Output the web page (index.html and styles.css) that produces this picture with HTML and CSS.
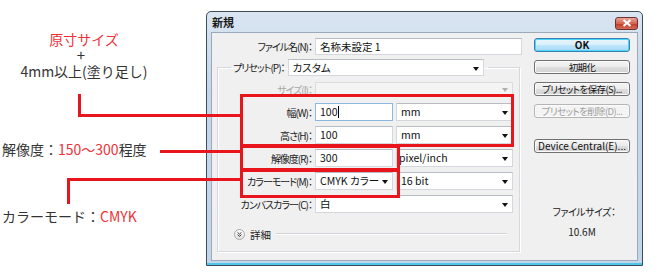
FILE: index.html
```html
<!DOCTYPE html>
<html lang="ja">
<head>
<meta charset="utf-8">
<title>新規</title>
<link rel="stylesheet" href="styles.css">
</head>
<body>
<div class="page">
  <div class="notes">
    <div class="note note-size">
      <div class="red">原寸サイズ</div>
      <div class="plus">+</div>
      <div>4mm以上(塗り足し)</div>
    </div>
    <div class="note note-res">解像度：<span class="red">150～300</span>程度</div>
    <div class="note note-cmyk">カラーモード：<span class="red">CMYK</span></div>
  </div>

  <div class="dialog">
    <div class="titlebar">
      <span class="title">新規</span>
      <span class="close"><svg width="10" height="8" viewBox="0 0 10 8"><path d="M1.5 1 L8.5 7 M8.5 1 L1.5 7" stroke="#fff" stroke-width="2.2"/></svg></span>
    </div>
    <div class="client">
      <div class="form">
        <div class="row row-name">
          <span class="label">ファイル名(N)：</span>
          <span class="field name-field">名称未設定 1</span>
        </div>
        <fieldset class="group">
          <legend class="legend">
            <span class="legend-label">プリセット(P)：</span>
            <span class="field select preset">カスタム<i class="arrow"></i></span>
          </legend>
          <div class="row row-size disabled">
            <span class="label">サイズ(I)：</span>
            <span class="field select wide"><i class="arrow"></i></span>
          </div>
          <div class="row row-f">
            <span class="label">幅(W)：</span>
            <span class="field small focus">100<i class="caret"></i></span>
            <span class="field select unit">mm<i class="arrow"></i></span>
          </div>
          <div class="row row-f">
            <span class="label">高さ(H)：</span>
            <span class="field small">100</span>
            <span class="field select unit">mm<i class="arrow"></i></span>
          </div>
          <div class="row row-f">
            <span class="label">解像度(R)：</span>
            <span class="field small">300</span>
            <span class="field select unit tight">pixel/inch<i class="arrow"></i></span>
          </div>
          <div class="row row-f">
            <span class="label">カラーモード(M)：</span>
            <span class="field select small">CMYK カラー<i class="arrow"></i></span>
            <span class="field select unit">16 bit<i class="arrow"></i></span>
          </div>
          <div class="row row-f">
            <span class="label">カンバスカラー(C)：</span>
            <span class="field select wide">白<i class="arrow"></i></span>
          </div>
          <div class="detail">
            <span class="detail-icon"><svg width="11" height="11" viewBox="0 0 11 11"><path d="M3.2 3 L5.5 5 L7.8 3 M3.2 5.8 L5.5 7.8 L7.8 5.8" fill="none" stroke="#333" stroke-width="1.2"/></svg></span>
            <span class="detail-text">詳細</span>
            <span class="detail-line"></span>
          </div>
        </fieldset>
      </div>
      <div class="side">
        <span class="btn default">OK</span>
        <span class="btn">初期化</span>
        <span class="btn">プリセットを保存(S)...</span>
        <span class="btn off">プリセットを削除(D)...</span>
        <span class="btn dc">Device Central(E)...</span>
        <div class="fsize">ファイルサイズ：</div>
        <div class="fsize-val">10.6M</div>
      </div>
    </div>
  </div>

  <div class="callout box1"></div>
  <div class="callout box2"></div>
  <div class="callout box3"></div>
  <div class="wire a-v"></div>
  <div class="wire a-h"></div>
  <div class="wire b-h"></div>
  <div class="wire c-h"></div>
  <div class="wire c-v"></div>
</div>
</body>
</html>
```

FILE: styles.css
```css
html, body {
  margin: 0;
  padding: 0;
  background: #fff;
}
body {
  width: 662px;
  height: 274px;
  overflow: hidden;
  font-family: "Noto Sans CJK JP", "Noto Sans", sans-serif;
  color: #222;
}
.page {
  position: relative;
  display: flex;
  height: 274px;
}

/* ---------- annotations ---------- */
.notes {
  width: 206px;
  flex: none;
  display: flex;
  flex-direction: column;
}
.note {
  font-size: 14px;
  line-height: 16px;
  color: #333;
  white-space: nowrap;
}
.red { color: #f0323a; }
.note-size {
  margin-top: 31px;
  width: 168px;
  text-align: center;
}
.note-size > div { height: 16px; }
.plus {
  font-size: 15px;
  padding-right: 6px;
}
.note-res {
  margin-top: 62px;
  padding-left: 2px;
}
.note-cmyk {
  margin-top: 51px;
  padding-left: 2px;
}

/* ---------- dialog ---------- */
.dialog {
  flex: none;
  margin-top: 11px;
  width: 437px;
  height: 255px;
  box-sizing: border-box;
  border: 1px solid #3d4c58;
  border-radius: 5px 5px 0 0;
  background: linear-gradient(#d9e5f1, #c6d7e9 30%, #c3d5e8);
  box-shadow: inset 0 -2px 0 #4ec6ea;
  padding: 0 4px 4px;
  display: flex;
  flex-direction: column;
  font-feature-settings: "palt";
}
.titlebar {
  height: 20px;
  flex: none;
  display: flex;
  justify-content: space-between;
  align-items: center;
}
.title {
  font-size: 11px;
  font-weight: bold;
  color: #1a1a1a;
  padding-left: 1px;
}
.close {
  width: 23px;
  height: 13px;
  margin-top: 2px;
  box-sizing: border-box;
  border: 1px solid #6b3230;
  border-radius: 3px;
  background: linear-gradient(#e8a597, #d56450 50%, #c0392b 51%, #d46a55);
  display: flex;
  align-items: center;
  justify-content: center;
}
.close svg { display: block; }

.client {
  flex: 1;
  display: flex;
  background: #f0f0f0;
  border: 1px solid #9aaabb;
}

/* ---------- form ---------- */
.form {
  width: 312px;
  flex: none;
}
.row {
  display: flex;
  align-items: center;
  gap: 3px;
}
.label {
  flex: none;
  width: 100px;
  text-align: right;
  font-size: 10px;
  letter-spacing: -1px;
  color: #222;
  white-space: nowrap;
}
.field {
  position: relative;
  box-sizing: border-box;
  height: 18px;
  background: #fff;
  border: 1px solid #d4d8dd;
  border-top-color: #b8bdc3;
  font-size: 10.5px;
  line-height: 16px;
  padding-left: 4px;
  display: flex;
  align-items: center;
  white-space: nowrap;
  color: #111;
}
.select { padding-right: 14px; }
.arrow {
  position: absolute;
  right: 4px;
  top: 7px;
  width: 0;
  height: 0;
  border-left: 3.5px solid transparent;
  border-right: 3.5px solid transparent;
  border-top: 4px solid #111;
}
.caret {
  display: inline-block;
  width: 1px;
  height: 12px;
  background: #000;
  margin-left: 1px;
}

.row-name {
  margin-top: 5px;
}
.name-field {
  width: 207px;
  height: 17px;
}

.group {
  margin: 4px 0 0 5px;
  padding: 0 0 10px 0;
  width: 303px;
  box-sizing: border-box;
  border: 1px solid #d5d9dd;
  box-shadow: 1px 1px 0 #fff, inset 1px 1px 0 #fff;
  min-width: 0;
}
.legend {
  margin-left: 13px;
  padding: 0 4px 0 2px;
  display: flex;
  align-items: center;
  gap: 3px;
}
.legend-label {
  font-size: 10px;
  letter-spacing: -1px;
  white-space: nowrap;
}
.preset {
  width: 196px;
  height: 17px;
}
.group .label { width: 94px; }

.row-size { margin-top: 6px; }
.row-size .field {
  height: 15px;
  background: #f4f4f4;
  border-color: #dcdcdc;
}
.disabled .label { color: #a7a7a7; }
.disabled .arrow { border-top-color: #b0b0b0; top: 5px; }

.row-f { margin-top: 5px; }
.row-size + .row-f { margin-top: 6px; }
.small { width: 78px; }
.unit { width: 117px; }
.tight { padding-left: 2px; }
.wide { width: 198px; }
.focus {
  border-color: #8cb7df;
}

.detail {
  margin-top: 14px;
  height: 14px;
  display: flex;
  align-items: center;
  padding-left: 16px;
}
.detail-icon {
  width: 11px;
  height: 11px;
  box-sizing: border-box;
  border: 1px solid #a9a9a9;
  border-radius: 50%;
  background: linear-gradient(#ffffff, #e2e2e2);
  display: flex;
  align-items: center;
  justify-content: center;
}
.detail-icon svg { display: block; }
.detail-text {
  font-size: 10.5px;
  margin-left: 5px;
}
.detail-line {
  margin-left: 5px;
  width: 231px;
  height: 1px;
  background: #cfd3d7;
  border-bottom: 1px solid #fff;
}

/* ---------- side buttons ---------- */
.side {
  margin-left: 10px;
  padding-top: 5px;
  width: 96px;
  display: flex;
  flex-direction: column;
  align-items: stretch;
}
.btn {
  height: 14px;
  box-sizing: border-box;
  border: 1px solid #707070;
  border-radius: 3px;
  background: linear-gradient(#f4f4f4, #ececec 48%, #dedede 52%, #d2d2d2);
  box-shadow: inset 0 0 0 1px #fbfbfb;
  font-size: 9.5px;
  letter-spacing: -0.6px;
  line-height: 12px;
  text-align: center;
  color: #111;
  white-space: nowrap;
  margin-bottom: 8px;
}
.btn.default {
  border-color: #3c7fb1;
  box-shadow: inset 0 0 0 1px #48d7fb;
  background: linear-gradient(#eaf6fd, #d9f0fc 48%, #bee6fd 52%, #a7d9f5);
  font-weight: bold;
  font-size: 10px;
  letter-spacing: 0;
}
.btn.off {
  color: #a0a0a0;
  border-color: #b5b5b5;
  background: #f4f4f4;
}
.btn.dc {
  margin-top: 13px;
  font-size: 10px;
  letter-spacing: 0;
}
.fsize {
  margin-top: 44px;
  font-size: 10px;
  letter-spacing: -0.5px;
  line-height: 14px;
  text-align: center;
  padding-left: 4px;
}
.fsize-val {
  margin-top: 6px;
  font-size: 10px;
  line-height: 14px;
  text-align: center;
}

/* ---------- red callouts (overlays) ---------- */
.callout {
  position: absolute;
  box-sizing: border-box;
  border: 3px solid #e8151d;
}
.box1 { left: 240px; top: 94px; width: 274px; height: 53px; }
.box2 { left: 240px; top: 145px; width: 160px; height: 26px; }
.box3 { left: 240px; top: 169px; width: 160px; height: 29px; }
.wire {
  position: absolute;
  background: #e8151d;
}
.a-v { left: 78px; top: 94px; width: 3px; height: 23px; }
.a-h { left: 78px; top: 114px; width: 163px; height: 3px; }
.b-h { left: 160px; top: 150px; width: 81px; height: 3px; }
.c-h { left: 67px; top: 178px; width: 174px; height: 3px; }
.c-v { left: 67px; top: 178px; width: 3px; height: 26px; }
```
